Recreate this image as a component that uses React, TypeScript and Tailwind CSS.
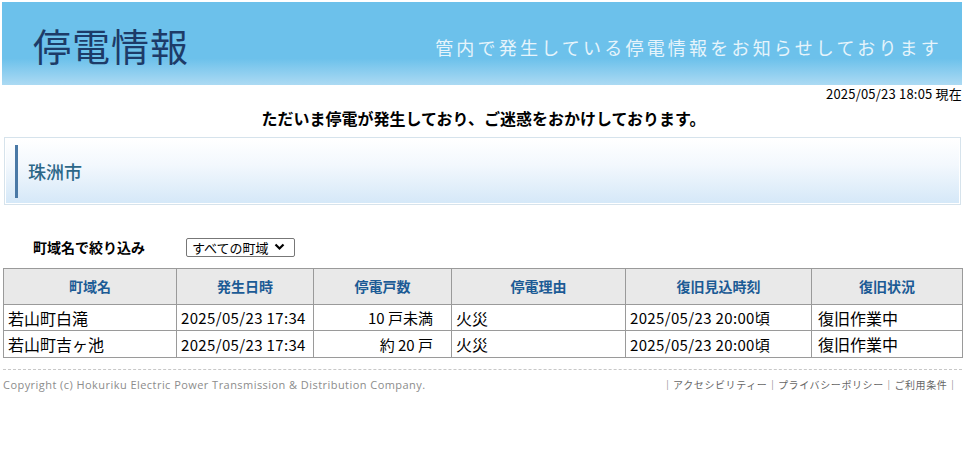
import React from "react";

const jp = { fontFamily: '"Noto Sans CJK JP", "Noto Sans", sans-serif' };

const rows = [
  ["若山町白滝", "2025/05/23 17:34", "10 戸未満", "火災", "2025/05/23 20:00頃", "復旧作業中"],
  ["若山町吉ヶ池", "2025/05/23 17:34", "約 20 戸", "火災", "2025/05/23 20:00頃", "復旧作業中"],
];

export default function App() {
  return (
    <div className="bg-white w-[971px] h-[452px] overflow-hidden" style={jp}>
      <div className="ml-[2px] pt-[2px] w-[960px]">
        <div className="h-[83px] flex items-center justify-between pl-[31px] pr-[20px] bg-[linear-gradient(to_bottom,#6cc1eb_0%,#6cc1eb_68%,#acdaf3_100%)]">
          <div className="text-[38px] leading-none text-[#1d3b68] tracking-[1px] pt-[2px]">停電情報</div>
          <div className="text-[18px] leading-none text-[#e6f4fb] tracking-[3.2px] pt-[6px]">管内で発生している停電情報をお知らせしております</div>
        </div>
        <div className="text-right text-[13px] leading-none text-black mt-[2px] tracking-[0.2px]">2025/05/23 18:05 現在</div>
        <div className="text-center font-bold text-[16px] leading-none text-black mt-[10px] pl-[3px]">ただいま停電が発生しており、ご迷惑をおかけしております。</div>
        <div className="mt-[11px] ml-[2px] w-[957px] h-[68px] border border-[#d6e3ec] p-[1px]">
          <div className="h-full bg-[linear-gradient(to_bottom,#ffffff_0%,#f3f8fd_40%,#d5e8f8_100%)] flex items-center pl-[9px]">
            <div className="w-[3px] h-[53px] bg-[#4a79a6]" />
            <div className="ml-[10px] text-[18px] font-medium text-[#2c6788] leading-none">珠洲市</div>
          </div>
        </div>
        <div className="flex items-center mt-[32px] h-[20px]">
          <div className="ml-[31px] w-[153px] text-[14px] font-bold text-black leading-none">町域名で絞り込み</div>
          <div className="w-[109px] h-[19px] border border-[#777] rounded-[2px] flex items-center pl-[5px] text-[13px] text-black leading-none">
            <span>すべての町域</span>
            <svg className="ml-[5px]" width="11" height="8" viewBox="0 0 11 8">
              <path d="M1.5 1.5 L5.5 5.5 L9.5 1.5" fill="none" stroke="#000" strokeWidth="2.2" />
            </svg>
          </div>
        </div>
        <table className="mt-[11px] ml-[1px] border-collapse border border-[#9a9a9a] w-[959px] table-fixed">
          <colgroup>
            <col className="w-[173px]" />
            <col className="w-[137px]" />
            <col className="w-[138px]" />
            <col className="w-[174px]" />
            <col className="w-[186px]" />
            <col className="w-[151px]" />
          </colgroup>
          <thead>
            <tr className="h-[36px] bg-[#e9e9e9]">
              {["町域名", "発生日時", "停電戸数", "停電理由", "復旧見込時刻", "復旧状況"].map((h) => (
                <th key={h} className="border border-[#9a9a9a] text-[14px] font-bold text-[#1c5b95] text-center p-0">{h}</th>
              ))}
            </tr>
          </thead>
          <tbody>
            {rows.map((r, i) => (
              <tr key={i} className={i === 0 ? "h-[26px]" : "h-[27px]"}>
                <td className="border border-[#9a9a9a] text-[16px] text-black pl-[4px] leading-none">{r[0]}</td>
                <td className="border border-[#9a9a9a] text-[15px] text-black pl-[4px] leading-none tracking-[0.35px] whitespace-nowrap">{r[1]}</td>
                <td className="border border-[#9a9a9a] text-[15px] text-black pr-[18px] text-right leading-none">{r[2]}</td>
                <td className="border border-[#9a9a9a] text-[16px] text-black pl-[4px] leading-none">{r[3]}</td>
                <td className="border border-[#9a9a9a] text-[15px] text-black pl-[4px] leading-none tracking-[0.35px] whitespace-nowrap">{r[4]}</td>
                <td className="border border-[#9a9a9a] text-[16px] text-black pl-[6px] leading-none">{r[5]}</td>
              </tr>
            ))}
          </tbody>
        </table>
        <div className="mt-[11px] ml-[1px] w-[959px] border-t border-dashed border-[#c8c8c8]" />
        <div className="flex justify-between items-center mt-[9px] ml-[1px] w-[959px] text-[11px] text-[#8c8c8c] leading-none">
          <span className="tracking-[0.45px]" style={{ fontFamily: '"Open Sans", "Liberation Sans", sans-serif' }}>Copyright (c) Hokuriku Electric Power Transmission &amp; Distribution Company.</span>
          <span className="pr-[4px] text-[10px] text-[#666] tracking-[0.6px]">｜アクセシビリティー｜プライバシーポリシー｜ご利用条件｜</span>
        </div>
      </div>
    </div>
  );
}
